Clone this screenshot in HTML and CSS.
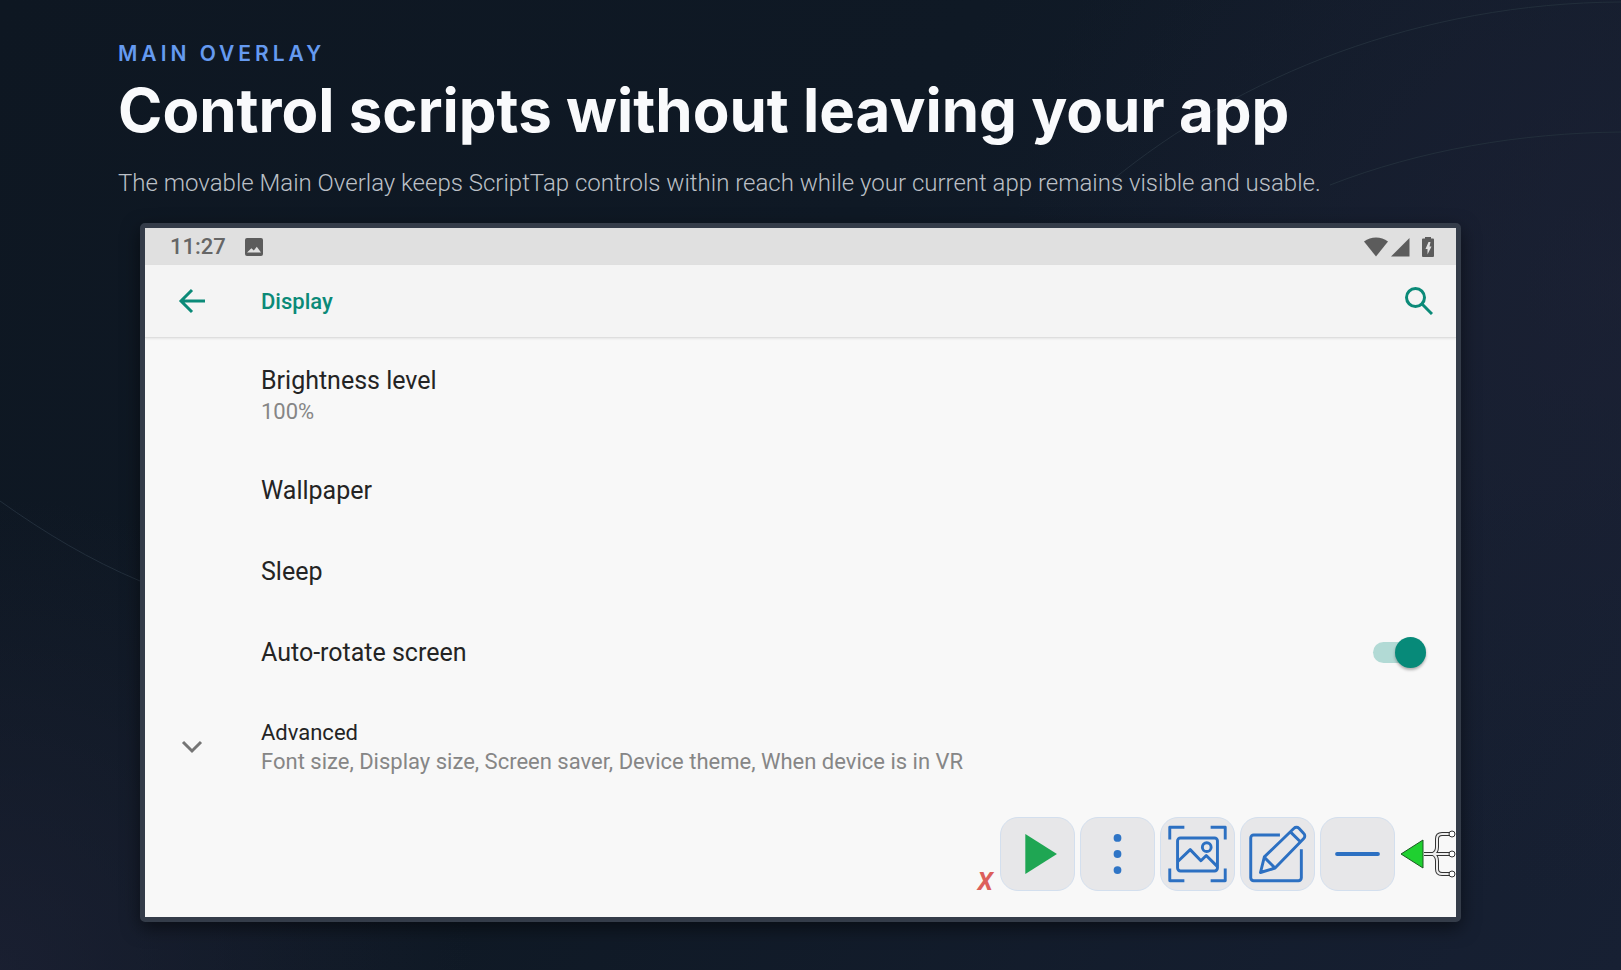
FILE: index.html
```html
<!DOCTYPE html>
<html lang="en">
<head>
  <meta charset="UTF-8">
  <meta name="viewport" content="width=device-width, initial-scale=1">
  <title>ScriptTap - Main Overlay</title>
  <link rel="stylesheet" href="styles.css">
</head>
<body>

  <svg class="lines" viewBox="0 0 1621 970" preserveAspectRatio="none" aria-hidden="true">
    <path d="M1110 182C1240 75 1420 3 1621 2"/>
    <path d="M1330 185C1420 150 1520 133 1621 132"/>
    <path d="M0 501C45 533 90 560 140 581"/>
  </svg>

  <main class="page">
    <header class="intro">
      <p class="eyebrow">MAIN OVERLAY</p>
      <h1>Control scripts without leaving your app</h1>
      <p class="lead">The movable Main Overlay keeps ScriptTap controls within reach while your current app remains visible and usable.</p>
    </header>

    <section class="device">
      <div class="status-bar">
        <span>11:27</span>
        <svg class="status-photo" width="18" height="18" viewBox="0 0 18 18">
          <path fill-rule="evenodd" d="M2 0h14a2 2 0 0 1 2 2v14a2 2 0 0 1-2 2H2a2 2 0 0 1-2-2V2a2 2 0 0 1 2-2zM2 14.500h14l-4.200-5.800-3 3.900-2.400-2.400z"/>
        </svg>
        <div class="status-icons">
          <svg width="24" height="20" viewBox="0 0 24 20"><path d="M0 4.500C7 -.8 17-.8 24 4.500L12 19.500z"/></svg>
          <svg width="19" height="20" viewBox="0 0 19 20"><path d="M18.500 1v18.500H0z"/></svg>
          <svg class="battery" width="12" height="20" viewBox="0 0 12 20">
            <path fill-rule="evenodd" d="M3 0h6v1.500h2a1 1 0 0 1 1 1V19a1 1 0 0 1-1 1H1a1 1 0 0 1-1-1V2.500a1 1 0 0 1 1-1h2zM6.500 5L3.500 12h2v5.500L9.500 9.500H7.500L8.500 5z"/>
          </svg>
        </div>
      </div>

      <div class="app-bar">
        <button class="icon-button" aria-label="Back">
          <svg width="28" height="26" viewBox="0 0 28 26"><path d="M27 13H3M14 2L3 13l11 11"/></svg>
        </button>
        <h2>Display</h2>
        <button class="icon-button search" aria-label="Search">
          <svg width="28" height="28" viewBox="0 0 28 28"><circle cx="10.500" cy="10.500" r="9"/><path d="M17 17l10 10"/></svg>
        </button>
      </div>

      <ul class="settings">
        <li class="row tall">
          <div class="text">
            <span class="name">Brightness level</span>
            <span class="note">100%</span>
          </div>
        </li>
        <li class="row"><span class="name">Wallpaper</span></li>
        <li class="row"><span class="name">Sleep</span></li>
        <li class="row">
          <label class="name" for="rotate">Auto-rotate screen</label>
          <input class="switch" id="rotate" type="checkbox" checked>
        </li>
        <li class="row tall advanced">
          <svg class="chevron" width="22" height="14" viewBox="0 0 22 14"><path d="M2 2l9 9 9-9"/></svg>
          <div class="text">
            <span class="name small">Advanced</span>
            <span class="note">Font size, Display size, Screen saver, Device theme, When device is in VR</span>
          </div>
        </li>
      </ul>

      <div class="overlay">
        <button class="close" aria-label="Close overlay">X</button>
        <button class="tool" aria-label="Play">
          <svg viewBox="0 0 75 74"><path class="play" d="M25 16.500v41L57.500 37z"/></svg>
        </button>
        <button class="tool" aria-label="More">
          <svg viewBox="0 0 75 74"><g class="dots"><circle cx="37.500" cy="20.500" r="4"/><circle cx="37.500" cy="37" r="4"/><circle cx="37.500" cy="53.500" r="4"/></g></svg>
        </button>
        <button class="tool" aria-label="Screenshot">
          <svg viewBox="0 0 75 74">
            <path d="M9 22V9.500h15M51 9.500h15V22M9 52v12.500h15M51 64.500h15V52"/>
            <rect x="17" y="20.500" width="41" height="34" rx="3"/>
            <path d="M17 45l13-12.500L41 44l5.500-5.500L58 50"/>
            <circle cx="47" cy="30" r="4.500"/>
          </svg>
        </button>
        <button class="tool" aria-label="Edit">
          <svg viewBox="0 0 75 74">
            <path d="M40 17.500H13a3 3 0 0 0-3 3v41a3 3 0 0 0 3 3h46a3 3 0 0 0 3-3V32"/>
            <path d="M20 56l4-16L54.500 10.500a3.500 3.500 0 0 1 5 0l5 5.500a3.500 3.500 0 0 1 0 5L35 51.500zM24 40.500l11 11M51 14.500l10 10"/>
          </svg>
        </button>
        <button class="tool" aria-label="Minimize">
          <svg viewBox="0 0 75 74"><path class="minus" d="M16.500 37h42"/></svg>
        </button>
        <svg class="handle" width="56" height="50" viewBox="0 0 56 50">
          <g class="wire-edge"><path d="M24 25h27M33 25q4-2 4-7v-8q0-5 5-5h8M33 25q4 2 4 7v8q0 5 5 5h8"/></g>
          <g class="wire"><path d="M24 25h27M33 25q4-2 4-7v-8q0-5 5-5h8M33 25q4 2 4 7v8q0 5 5 5h8"/></g>
          <g class="nodes"><circle cx="52" cy="5" r="3"/><circle cx="52" cy="25" r="3"/><circle cx="52" cy="45" r="3"/></g>
          <path class="arrow" d="M1 25L23 11v28z"/>
        </svg>
      </div>
    </section>
  </main>

</body>
</html>
```
FILE: styles.css
```css
* { box-sizing: border-box; margin: 0; padding: 0; }

body {
  position: relative;
  min-height: 100vh;
  overflow-x: hidden;
  background-color: #101824;
  background-image:
    radial-gradient(circle at 100% 30%, rgba(30,34,54,0.6), rgba(30,34,54,0) 35%),
    radial-gradient(circle at 0% 100%, rgba(30,34,54,0.7), rgba(30,34,54,0) 25%),
    linear-gradient(120deg, #0e1722, #0f1925 45%, #172033);
  font-family: Roboto, "Liberation Sans", sans-serif;
}

button {
  border: none;
  background: none;
  font: inherit;
  cursor: pointer;
}

/* Faint curves behind the page */
.lines {
  position: absolute;
  inset: 0;
  width: 100%;
  height: 100%;
  fill: none;
  stroke: #222e3b;
}

.page {
  position: relative;
  padding: 38px 160px 48px 140px;
}

/* Intro text */
.intro {
  margin: 0 -22px;
  padding-bottom: 22px;
  font-family: Inter, "Liberation Sans", sans-serif;
}
.eyebrow {
  color: #659af0;
  font-size: 21px;
  font-weight: 600;
  line-height: 32px;
  letter-spacing: 4px;
}
h1 {
  color: #f9fafc;
  font-size: 60px;
  font-weight: 700;
  line-height: 80px;
}
.lead {
  padding-top: 15px;
  color: #bcc0c7;
  font-family: Roboto, "Liberation Sans", sans-serif;
  font-size: 24px;
  font-weight: 300;
  line-height: 36px;
}

/* Device frame */
.device {
  border: 5px solid #343c49;
  border-radius: 5px;
  background: #f8f8f8;
  box-shadow: 0 6px 18px rgba(0,0,0,0.5);
}
.status-bar {
  display: flex;
  align-items: center;
  height: 37px;
  padding: 0 22px 0 25px;
  background: #e0e0e0;
  color: #666;
  fill: #5c5c5c;
  font-size: 22px;
  font-weight: 500;
}
.status-photo { margin-left: 19px; }
.status-icons {
  display: flex;
  gap: 3px;
  margin-left: auto;
}
.battery { margin-left: 9px; }

.app-bar {
  display: flex;
  align-items: center;
  height: 73px;
  padding: 0 23px 0 33px;
  border-bottom: 1px solid #dedede;
  background: #f4f4f4;
  box-shadow: 0 1px 2px rgba(0,0,0,0.08);
}
.icon-button {
  display: flex;
  fill: none;
  stroke: #0b8a78;
  stroke-width: 3px;
}
.search { margin-left: auto; }
h2 {
  margin-left: 55px;
  color: #0b8a78;
  font-size: 22px;
  font-weight: 500;
}

/* Settings list */
.settings {
  padding-top: 1px;
  list-style: none;
}
.row {
  display: flex;
  align-items: center;
  height: 81px;
  padding: 0 30px 0 116px;
}
.row.tall { height: 111px; }
.row.advanced {
  height: 108px;
  padding-left: 36px;
}
.text {
  display: flex;
  flex-direction: column;
}
.name {
  color: #242424;
  font-size: 25px;
  line-height: 34px;
}
.name.small {
  font-size: 22px;
  line-height: 30px;
}
.note {
  color: #868686;
  font-size: 22px;
  line-height: 28px;
}
.chevron {
  margin-right: 58px;
  fill: none;
  stroke: #757575;
  stroke-width: 3px;
}
.switch {
  appearance: none;
  position: relative;
  width: 53px;
  height: 21px;
  margin-left: auto;
  border-radius: 11px;
  background: #b2dad5;
  cursor: pointer;
}
.switch::before {
  content: "";
  position: absolute;
  top: -5px;
  right: 0;
  width: 31px;
  height: 31px;
  border-radius: 50%;
  background: #078a79;
  box-shadow: 0 2px 3px rgba(0,0,0,0.3);
}
.switch:not(:checked)::before {
  right: 22px;
  background: #fafafa;
}

/* Main overlay controls */
.overlay {
  display: flex;
  justify-content: flex-end;
  align-items: center;
  gap: 5px;
  padding: 16px 0 26px;
}
.close {
  align-self: flex-end;
  padding-right: 2px;
  color: #dc5f5b;
  font-size: 25px;
  font-style: italic;
  font-weight: 700;
  line-height: 18px;
}
.tool {
  width: 75px;
  height: 74px;
  border: 1px solid #d3dfee;
  border-radius: 18px;
  background: #e7e7e9;
}
.tool svg {
  display: block;
  width: 100%;
  height: 100%;
  fill: none;
  stroke: #2c70c2;
  stroke-width: 3px;
  stroke-linejoin: round;
}
.tool .play {
  fill: #1fa653;
  stroke: none;
}
.tool .dots {
  fill: #2f75c6;
  stroke: none;
}
.tool .minus {
  stroke-width: 4px;
  stroke-linecap: round;
}
.handle { fill: none; }
.wire-edge {
  stroke: #333;
  stroke-width: 4px;
}
.wire {
  stroke: #eee;
  stroke-width: 2px;
}
.nodes {
  fill: #fff;
  stroke: #333;
}
.arrow {
  fill: #1fd030;
  stroke: #1c5a22;
  stroke-linejoin: round;
}
```
